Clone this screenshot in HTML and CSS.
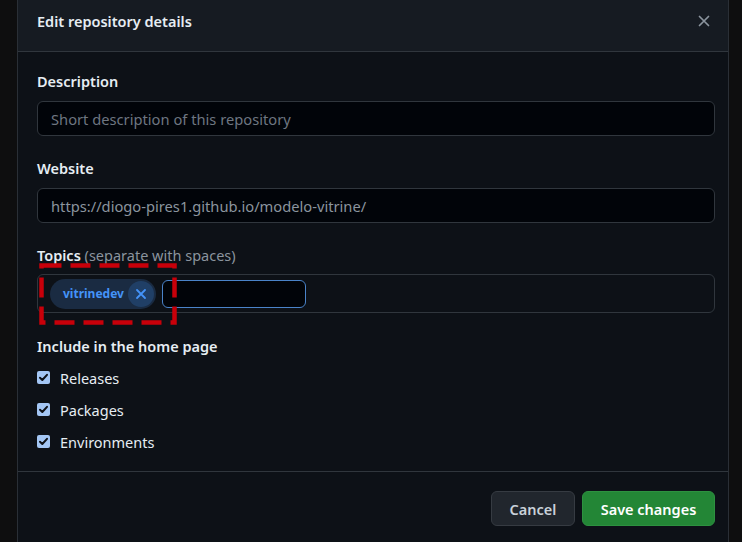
FILE: index.html
```html
<!DOCTYPE html>
<html lang="en">
<head>
<meta charset="utf-8">
<title>Edit repository details</title>
<link rel="stylesheet" href="styles.css">
</head>
<body>
<div class="page">
  <div class="gutter-left"></div>
  <div class="dialog">
    <div class="dialog-header">
      <h1 class="dialog-title">Edit repository details</h1>
      <button class="close-btn" aria-label="Close">
        <svg width="16" height="16" viewBox="0 0 16 16"><path d="M3.5 3.5 12.5 12.5M12.5 3.5 3.5 12.5" stroke="#8b949e" stroke-width="1.7" stroke-linecap="round" fill="none"/></svg>
      </button>
    </div>
    <div class="dialog-body">
      <div class="field">
        <label class="field-label">Description</label>
        <div class="text-input placeholder">Short description of this repository</div>
      </div>
      <div class="field">
        <label class="field-label">Website</label>
        <div class="text-input value">https://diogo-pires1.github.io/modelo-vitrine/</div>
      </div>
      <div class="field topics-field">
        <label class="field-label">Topics <span class="hint">(separate with spaces)</span></label>
        <div class="topics-box">
          <span class="topic-chip">
            <span class="topic-name">vitrinedev</span>
            <span class="topic-remove">
              <svg width="12" height="12" viewBox="0 0 12 12"><path d="M2 2 10 10M10 2 2 10" stroke="#4493f8" stroke-width="1.8" stroke-linecap="round" fill="none"/></svg>
            </span>
          </span>
          <span class="topic-input"></span>
        </div>
        <svg class="annotation" width="138" height="62" viewBox="0 0 138 62">
          <rect x="2.5" y="2.5" width="133" height="57" fill="none" stroke="#c8000a" stroke-width="4.5" stroke-dasharray="20 9"/>
        </svg>
      </div>
      <div class="field home-field">
        <label class="field-label">Include in the home page</label>
        <div class="check-row"><span class="checkbox"><svg width="13" height="13" viewBox="0 0 13 13"><path d="M3 6.8 5.3 9 10 3.8" stroke="#0d1117" stroke-width="2" fill="none" stroke-linecap="round" stroke-linejoin="round"/></svg></span><span class="check-label">Releases</span></div>
        <div class="check-row"><span class="checkbox"><svg width="13" height="13" viewBox="0 0 13 13"><path d="M3 6.8 5.3 9 10 3.8" stroke="#0d1117" stroke-width="2" fill="none" stroke-linecap="round" stroke-linejoin="round"/></svg></span><span class="check-label">Packages</span></div>
        <div class="check-row"><span class="checkbox"><svg width="13" height="13" viewBox="0 0 13 13"><path d="M3 6.8 5.3 9 10 3.8" stroke="#0d1117" stroke-width="2" fill="none" stroke-linecap="round" stroke-linejoin="round"/></svg></span><span class="check-label">Environments</span></div>
      </div>
    </div>
    <div class="dialog-footer">
      <button class="btn btn-cancel">Cancel</button>
      <button class="btn btn-save">Save changes</button>
    </div>
  </div>
  <div class="gutter-right"></div>
</div>
</body>
</html>
```

FILE: styles.css
```css
html, body {
  margin: 0;
  padding: 0;
  background: #0e0e0f;
  height: 100%;
  overflow: hidden;
}

body {
  font-family: "Noto Sans", "Open Sans", sans-serif;
  font-size: 14px;
  color: #e6edf3;
}

.page {
  display: flex;
  height: 542px;
}

.gutter-left {
  width: 17px;
  flex: none;
  background: #0e0e0f;
}

.gutter-right {
  flex: 1;
  background: #0e0e0f;
}

.dialog {
  width: 710px;
  flex: none;
  background: #0d1117;
  border-left: 1px solid #2a2f36;
  border-right: 1px solid #2a2f36;
  display: flex;
  flex-direction: column;
}

.dialog-header {
  height: 52px;
  box-sizing: border-box;
  background: #161b22;
  border-bottom: 1px solid #30363d;
  display: flex;
  align-items: flex-start;
  justify-content: space-between;
  padding: 11px 14px 0 19px;
}

.dialog-title {
  margin: 0;
  font-size: 14.5px;
  font-weight: 600;
  line-height: 21px;
  color: #e6edf3;
}

.close-btn {
  background: none;
  border: none;
  padding: 0;
  margin: 2px 2px 0 0;
  width: 16px;
  height: 16px;
  display: flex;
}

.dialog-body {
  padding: 19px 13px 0 19px;
  height: 420px;
  box-sizing: border-box;
  border-bottom: 1px solid #30363d;
}

.field {
  margin-bottom: 22px;
}

.field-label {
  display: block;
  font-size: 14.5px;
  font-weight: 600;
  line-height: 20px;
  color: #e6edf3;
  margin-bottom: 10px;
}

.hint {
  font-weight: 400;
  color: #8b949e;
}

.text-input {
  height: 35px;
  box-sizing: border-box;
  background: #010409;
  border: 1px solid #30363d;
  border-radius: 6px;
  padding: 0 13px;
  display: flex;
  align-items: center;
  font-size: 14.7px;
}

.placeholder {
  color: #6e7681;
}

.value {
  color: #8b949e;
}

.topics-field {
  position: relative;
  margin-bottom: 23px;
}

.topics-field .field-label {
  margin-bottom: 9px;
}

.topics-box {
  height: 39px;
  box-sizing: border-box;
  background: #0d1117;
  border: 1px solid #30363d;
  border-radius: 6px;
  display: flex;
  align-items: center;
  padding: 0 12px;
  gap: 6px;
}

.topic-chip {
  display: flex;
  align-items: center;
  height: 30px;
  background: #1a2b42;
  border-radius: 15px;
  padding: 0 2px 0 13px;
}

.topic-name {
  font-size: 12px;
  font-weight: 700;
  color: #4493f8;
  margin-right: 4px;
}

.topic-remove {
  width: 26px;
  height: 26px;
  border-radius: 13px;
  background: #203f66;
  display: flex;
  align-items: center;
  justify-content: center;
}

.topic-input {
  width: 144px;
  height: 28px;
  box-sizing: border-box;
  border: 1.5px solid #4a83c9;
  border-radius: 6px;
  background: #010409;
}

.annotation {
  position: absolute;
  left: 2px;
  top: 18px;
}

.home-field .field-label {
  margin-bottom: 6px;
}

.check-row {
  height: 32px;
  display: flex;
  align-items: center;
}

.checkbox {
  width: 13px;
  height: 13px;
  border-radius: 2px;
  background: #a3c6f4;
  display: flex;
  margin-right: 10px;
  margin-top: -2px;
}

.check-label {
  font-size: 14.5px;
  color: #e6edf3;
}

.dialog-footer {
  display: flex;
  justify-content: flex-end;
  gap: 7px;
  padding: 19px 13px 0 0;
}

.btn {
  font-family: "Noto Sans", "Open Sans", sans-serif;
  height: 35px;
  border-radius: 6px;
  font-size: 14.5px;
  font-weight: 600;
  padding: 0;
  cursor: pointer;
}

.btn-cancel {
  width: 84px;
  background: #21262d;
  border: 1px solid #363b42;
  color: #c9d1d9;
}

.btn-save {
  width: 133px;
  background: #238636;
  border: 1px solid #2d9140;
  color: #ffffff;
}
```
